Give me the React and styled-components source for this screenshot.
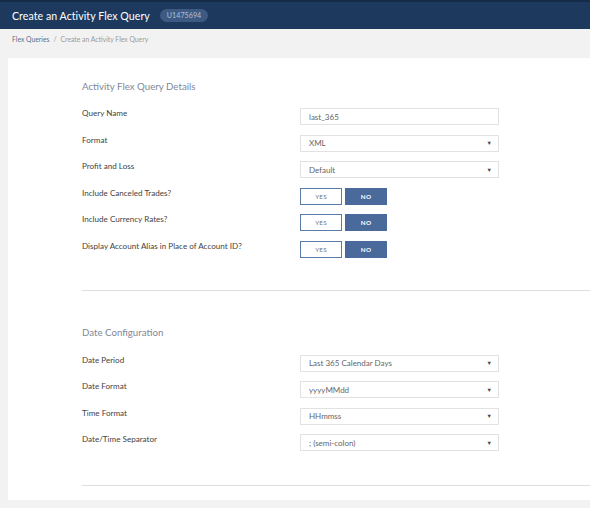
import React from "react";
import styled, { createGlobalStyle } from "styled-components";

const Global = createGlobalStyle`
  html, body { margin: 0; padding: 0; background: #f2f2f2; }
  body { font-family: Lato, "Open Sans", "Liberation Sans", sans-serif; width: 590px; height: 508px; overflow: hidden; }
  * { box-sizing: border-box; }
`;

const Header = styled.header`
  height: 29px;
  background: #1d3a5e;
  border-top: 2px solid #152c48;
  display: flex;
  align-items: center;
  padding: 0 12px;
  gap: 10px;
`;

const Title = styled.h1`
  margin: 0;
  font-size: 10.6px;
  font-weight: 400;
  color: #ffffff;
  letter-spacing: 0.05px;
`;

const Badge = styled.span`
  background: #3d5b82;
  color: #aebfd6;
  font-size: 7.2px;
  border-radius: 7px;
  padding: 2px 7px;
  line-height: 9px;
`;

const Crumbs = styled.nav`
  height: 29px;
  display: flex;
  align-items: flex-start;
  padding: 6px 12px 0;
  font-size: 6.8px;
  color: #9a9a9a;
  gap: 4px;
`;

const CrumbLink = styled.span`
  color: #5f6f86;
`;

const Card = styled.main`
  margin-left: 8px;
  background: #ffffff;
  height: 442px;
  padding: 22px 0 0 74px;
`;

const Section = styled.section`
  padding-bottom: ${(p) => p.$pb}px;
  border-bottom: 1px solid #dedede;
  margin-bottom: ${(p) => p.$mb}px;
`;

const Heading = styled.h2`
  margin: 0 0 ${(p) => p.$mb}px 0;
  font-size: 9.7px;
  font-weight: 400;
  color: #808896;
  line-height: 12px;
`;

const Rows = styled.div`
  display: flex;
  flex-direction: column;
  gap: ${(p) => p.$gap}px;
`;

const Row = styled.div`
  display: grid;
  grid-template-columns: 218px 199px;
  align-items: start;
  height: 17px;
`;

const Label = styled.div`
  font-size: 8.1px;
  color: #444444;
  line-height: 10px;
`;

const Field = styled.div`
  height: 17px;
  border: 1px solid #e2e2e2;
  display: flex;
  align-items: center;
  justify-content: space-between;
  padding: 0 6px 0 8px;
  font-size: 8px;
  color: #666666;
`;

const Caret = styled.span`
  font-size: 5.5px;
  color: #444;
`;

const Toggle = styled.div`
  display: flex;
  gap: 3px;
`;

const ToggleBtn = styled.div`
  width: 42px;
  height: 17px;
  display: flex;
  align-items: center;
  justify-content: center;
  font-size: 6.3px;
  font-weight: ${(p) => (p.$on ? 700 : 400)};
  border: 1px solid ${(p) => (p.$on ? "#4a6a9b" : "#5a7aa8")};
  background: ${(p) => (p.$on ? "#4a6a9b" : "#ffffff")};
  color: ${(p) => (p.$on ? "#ffffff" : "#6a7488")};
  letter-spacing: 0.2px;
`;

const Select = ({ value }) => (
  <Field>
    <span>{value}</span>
    <Caret>▼</Caret>
  </Field>
);

const YesNo = () => (
  <Toggle>
    <ToggleBtn>YES</ToggleBtn>
    <ToggleBtn $on>NO</ToggleBtn>
  </Toggle>
);

export default function App() {
  return (
    <>
      <Global />
      <Header>
        <Title>Create an Activity Flex Query</Title>
        <Badge>U1475694</Badge>
      </Header>
      <Crumbs>
        <CrumbLink>Flex Queries</CrumbLink>
        <span>/</span>
        <span>Create an Activity Flex Query</span>
      </Crumbs>
      <Card>
        <Section $pb={32} $mb={35}>
          <Heading $mb={16}>Activity Flex Query Details</Heading>
          <Rows $gap={9.6}>
            <Row>
              <Label>Query Name</Label>
              <Field>last_365</Field>
            </Row>
            <Row>
              <Label>Format</Label>
              <Select value="XML" />
            </Row>
            <Row>
              <Label>Profit and Loss</Label>
              <Select value="Default" />
            </Row>
            <Row>
              <Label>Include Canceled Trades?</Label>
              <YesNo />
            </Row>
            <Row>
              <Label>Include Currency Rates?</Label>
              <YesNo />
            </Row>
            <Row>
              <Label>Display Account Alias in Place of Account ID?</Label>
              <YesNo />
            </Row>
          </Rows>
        </Section>
        <Section $pb={34} $mb={0}>
          <Heading $mb={17}>Date Configuration</Heading>
          <Rows $gap={9.4}>
            <Row>
              <Label>Date Period</Label>
              <Select value="Last 365 Calendar Days" />
            </Row>
            <Row>
              <Label>Date Format</Label>
              <Select value="yyyyMMdd" />
            </Row>
            <Row>
              <Label>Time Format</Label>
              <Select value="HHmmss" />
            </Row>
            <Row>
              <Label>Date/Time Separator</Label>
              <Select value="; (semi-colon)" />
            </Row>
          </Rows>
        </Section>
      </Card>
    </>
  );
}
